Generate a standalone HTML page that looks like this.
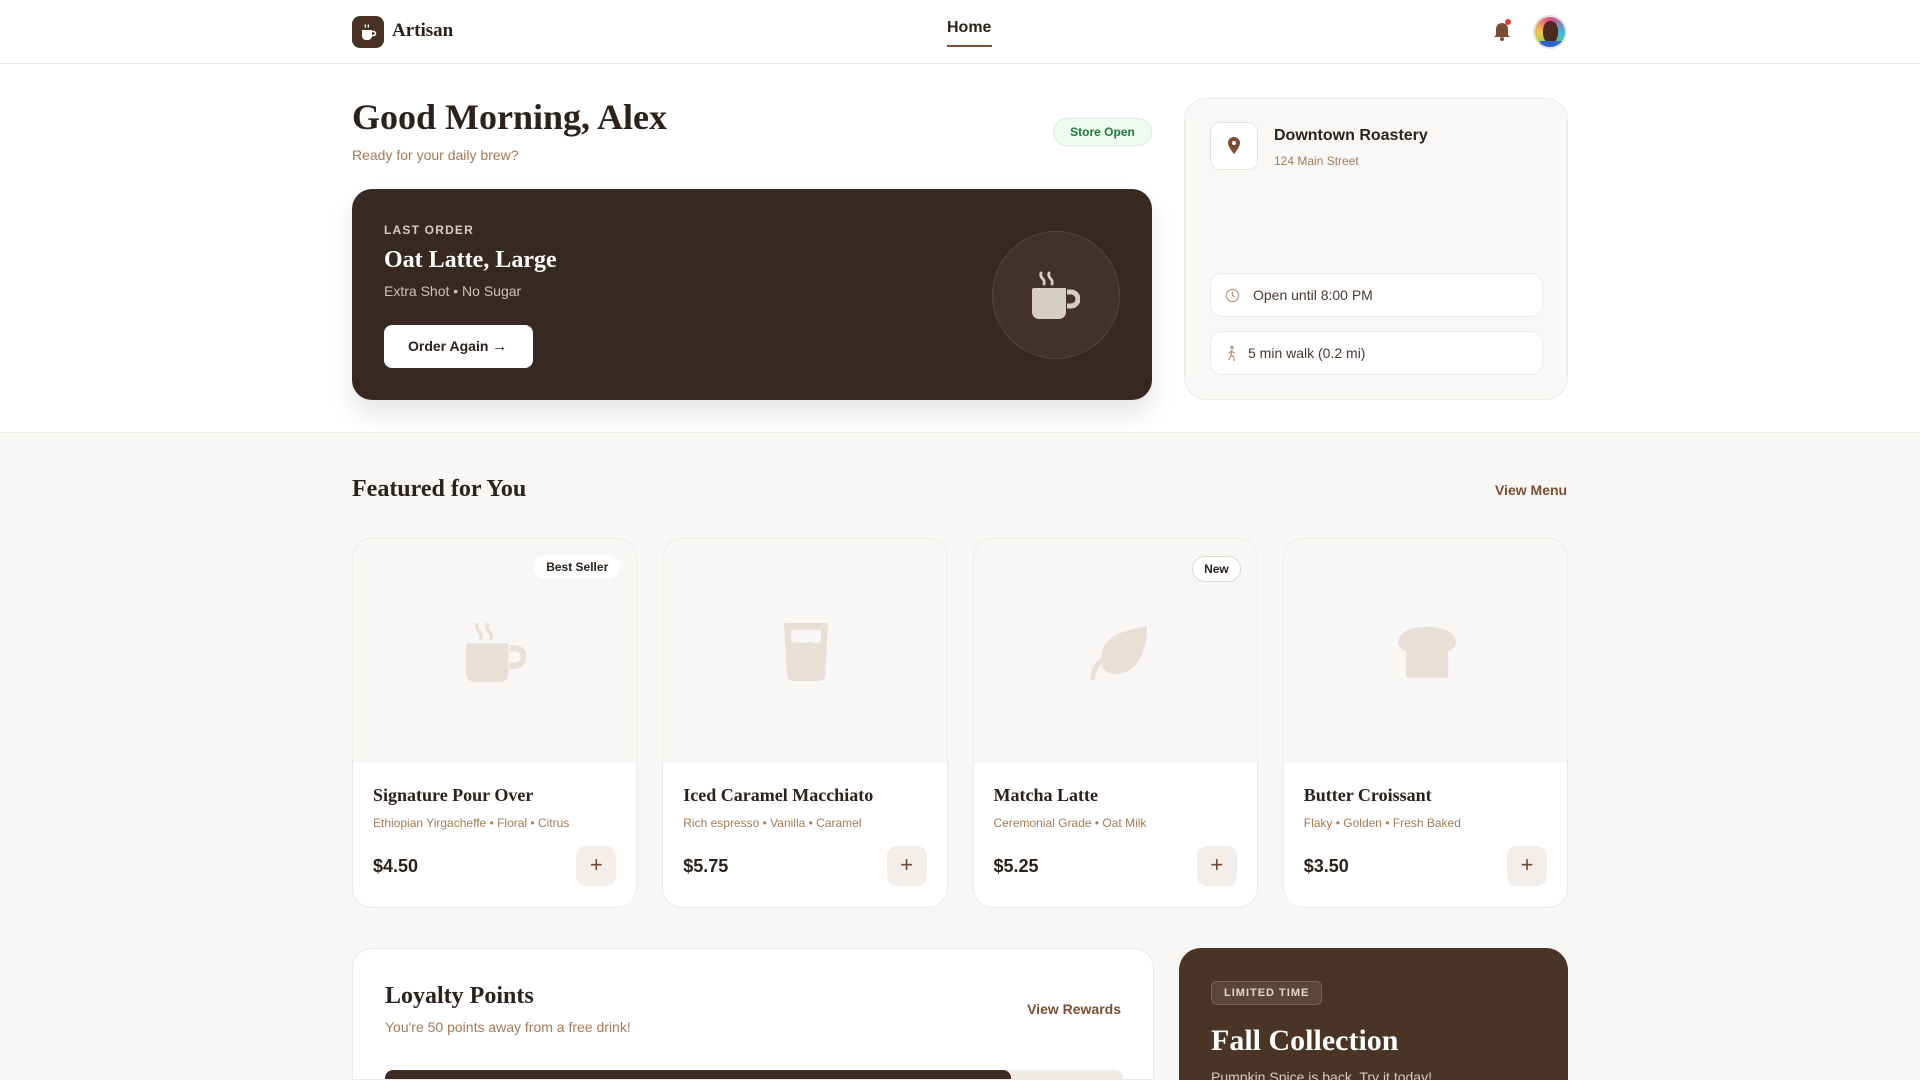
<!DOCTYPE html>
<html><head><meta charset="utf-8"><style>
*{box-sizing:border-box;margin:0;padding:0}
html,body{width:1920px;height:1080px;overflow:hidden}
body{font-family:"Liberation Sans",sans-serif;background:#fff;color:#2c211b;position:relative}
.serif{font-family:"Liberation Serif",serif;font-weight:700}
.abs{position:absolute}
header{position:absolute;left:0;top:0;width:1920px;height:64px;border-bottom:1px solid #ebe4dc;background:#fff}
.logo{left:352px;top:16px;width:32px;height:32px;border-radius:8px;background:#4a3325}
.brand{left:392px;top:20px;font-size:19px;color:#2c211b}
.home{left:947px;top:19px;font-size:16px;font-weight:700;color:#2c211b}
.ul{left:947px;top:45px;width:45px;height:2px;background:#7a4e33}
.beige{position:absolute;left:0;top:432px;width:1920px;height:648px;background:#f9f7f5;border-top:1px solid #f0ebe5}
.card{background:#fff;border:1px solid #efe9e3;border-radius:20px;overflow:hidden}
.img{height:224px;background:#f9f7f5;position:relative}
.t{font-size:18px;color:#2c211b}
.d{font-size:12px;color:#a57a55}
.p{font-size:18px;font-weight:700;color:#2c211b}
.plus{width:40px;height:40px;border-radius:10px;background:#f3eee9;color:#6b4a35;font-size:22px;text-align:center;line-height:38px}
.row{background:#fff;border:1px solid #f0ebe5;border-radius:12px;font-size:14px;color:#4a3a30}
</style></head><body>
<header>
<div class="abs logo"><svg width="32" height="32" viewBox="0 0 32 32"><path d="M10 14h10v6a4 4 0 0 1-4 4h-2a4 4 0 0 1-4-4z" fill="#fff"/><path d="M20 15.5h1.5a2 2 0 0 1 0 4H20" stroke="#fff" stroke-width="1.6" fill="none"/><path d="M13 8.5q1 1.5 0 3M16 8.5q1 1.5 0 3" stroke="#fff" stroke-width="1.2" fill="none"/></svg></div>
<div class="abs brand serif">Artisan</div>
<div class="abs home">Home</div><div class="abs ul"></div>
<svg class="abs" style="left:1491px;top:17px" width="22" height="26" viewBox="0 0 22 26"><path d="M5 18V12a6 6 0 0 1 12 0v6l2 2H3z" fill="#7a4e33"/><circle cx="11" cy="22" r="2" fill="#7a4e33"/><circle cx="17" cy="5" r="3" fill="#e53935"/></svg>
<div class="abs" style="left:1533px;top:15px;width:34px;height:34px;border-radius:50%;background:conic-gradient(#e84a8a,#3ab7d8,#6fd06f,#f5c84a,#e84a8a);border:2px solid #e9e2da;overflow:hidden"><div style="position:absolute;left:8px;top:4px;width:15px;height:22px;border-radius:45%;background:#4a2a1e"></div><div style="position:absolute;left:5px;top:24px;width:22px;height:10px;background:#2d63c9"></div></div>
</header>

<div class="abs serif" style="left:352px;top:96px;font-size:36px;color:#2c211b">Good Morning, Alex</div>
<div class="abs" style="left:352px;top:147px;font-size:14px;color:#a57a55">Ready for your daily brew?</div>
<div class="abs" style="left:1053px;top:118px;width:99px;height:28px;border-radius:14px;background:#effaf1;border:1px solid #d6f0dc;color:#1e7a3a;font-size:12px;font-weight:700;text-align:center;line-height:26px">Store Open</div>

<div class="abs" style="left:352px;top:189px;width:800px;height:211px;border-radius:20px;background:#382822;box-shadow:0 14px 24px rgba(60,40,30,.12)">
<div class="abs" style="left:32px;top:34px;font-size:12px;letter-spacing:1.2px;font-weight:700;color:#d7ccc2">LAST ORDER</div>
<div class="abs serif" style="left:32px;top:58px;font-size:24px;color:#fff">Oat Latte, Large</div>
<div class="abs" style="left:32px;top:94px;font-size:14px;color:#cfc3b8">Extra Shot • No Sugar</div>
<div class="abs" style="left:32px;top:136px;width:149px;height:43px;border-radius:8px;background:#fff;font-size:14px;font-weight:700;color:#2c211b;line-height:43px;padding-left:24px">Order Again <span style="font-size:15px">→</span></div>
<div class="abs" style="left:640px;top:42px;width:128px;height:128px;border-radius:50%;background:#43322b;border:1px solid #574339"></div>
<svg class="abs" style="left:680px;top:82px" width="48" height="48" viewBox="0 0 48 48"><path d="M0 19a2 2 0 0 1 2-2h32v24a7 7 0 0 1-7 7H7a7 7 0 0 1-7-7z" fill="#d6cdc3"/><path d="M35 21h4a6 6 0 0 1 0 14h-4" stroke="#d6cdc3" stroke-width="5" fill="none"/><path d="M9 2q-1 3 1.5 5.5T12 13M17 2q-1 3 1.5 5.5T20 13" stroke="#d6cdc3" stroke-width="2.8" fill="none" stroke-linecap="round"/></svg>
</div>

<div class="abs" style="left:1184px;top:98px;width:384px;height:302px;border-radius:22px;background:#faf8f6;border:1px solid #efe9e3">
<div class="abs" style="left:25px;top:23px;width:48px;height:48px;border-radius:10px;background:#fff;border:1px solid #e9e2da"></div>
<svg class="abs" style="left:41px;top:37px" width="16" height="20" viewBox="0 0 16 20"><path d="M8 1a6 6 0 0 1 6 6c0 4-6 11-6 11S2 11 2 7a6 6 0 0 1 6-6z" fill="#7a4e33"/><circle cx="8" cy="7" r="2" fill="#fff"/></svg>
<div class="abs" style="left:89px;top:28px;font-size:16px;font-weight:700;color:#2c211b">Downtown Roastery</div>
<div class="abs" style="left:89px;top:55px;font-size:12px;color:#a57a55">124 Main Street</div>
<div class="abs row" style="left:25px;top:174px;width:333px;height:44px"><svg class="abs" style="left:14px;top:14px" width="15" height="15" viewBox="0 0 16 16"><circle cx="8" cy="8" r="6.5" stroke="#b89a82" stroke-width="1.3" fill="none"/><path d="M8 4v4l2.5 1.5" stroke="#b89a82" stroke-width="1.3" fill="none"/></svg><span class="abs" style="left:42px;top:13px">Open until 8:00 PM</span></div>
<div class="abs row" style="left:25px;top:232px;width:333px;height:44px"><svg class="abs" style="left:14px;top:13px" width="14" height="17" viewBox="0 0 14 17"><circle cx="7" cy="2.5" r="1.8" fill="#b89a82"/><path d="M7 5l-1 5 3 2v4M6 10l-2 5M6.5 6l-3 2.5M7 6.5l3 2" stroke="#b89a82" stroke-width="1.3" fill="none"/></svg><span class="abs" style="left:37px;top:13px">5 min walk (0.2 mi)</span></div>
</div>

<div class="beige"></div>
<div class="abs serif" style="left:352px;top:476px;font-size:24px">Featured for You</div>
<div class="abs" style="left:1495px;top:482px;font-size:14px;font-weight:700;color:#7a4e33">View Menu</div>

<div class="abs" style="left:352px;top:538px;width:1216px;height:370px;display:grid;grid-template-columns:repeat(4,1fr);gap:25px">
 <div class="card"><div class="img"><div class="abs" style="right:16px;top:16px;padding:5px 12px;background:#fff;border-radius:14px;font-size:12px;font-weight:700">Best Seller</div>
 <svg class="abs" style="left:113px;top:83px" width="60" height="60" viewBox="0 0 48 48"><path d="M0 19a2 2 0 0 1 2-2h32v24a7 7 0 0 1-7 7H7a7 7 0 0 1-7-7z" fill="#e8e0d7"/><path d="M35 21h4a6 6 0 0 1 0 14h-4" stroke="#e8e0d7" stroke-width="5" fill="none"/><path d="M9 2q-1 3 1.5 5.5T12 13M17 2q-1 3 1.5 5.5T20 13" stroke="#e8e0d7" stroke-width="2.8" fill="none" stroke-linecap="round"/></svg></div>
 <div style="padding:22px 20px"><div class="t serif">Signature Pour Over</div><div class="d" style="margin-top:10px">Ethiopian Yirgacheffe • Floral • Citrus</div><div style="display:flex;justify-content:space-between;align-items:center;margin-top:16px"><span class="p">$4.50</span><div class="plus">+</div></div></div></div>
 <div class="card"><div class="img"><svg class="abs" style="left:120px;top:83px" width="46" height="60" viewBox="0 0 46 60"><path d="M1 3a2 2 0 0 1 2-2h40a2 2 0 0 1 2 2l-3 50a6 6 0 0 1-6 6H10a6 6 0 0 1-6-6z" fill="#e8e0d7"/><path d="M8 8h30v10a3 3 0 0 1-3 3h-4q-4-2-8 0h-4q-4-2-8 0a3 3 0 0 1-3-3z" fill="#f9f7f5"/></svg></div>
 <div style="padding:22px 20px"><div class="t serif">Iced Caramel Macchiato</div><div class="d" style="margin-top:10px">Rich espresso • Vanilla • Caramel</div><div style="display:flex;justify-content:space-between;align-items:center;margin-top:16px"><span class="p">$5.75</span><div class="plus">+</div></div></div></div>
 <div class="card"><div class="img"><div class="abs" style="right:16px;top:17px;padding:5px 11px;background:#fff;border:1px solid #e3d9cf;border-radius:14px;font-size:12px;font-weight:700">New</div>
 <svg class="abs" style="left:113px;top:85px" width="62" height="56" viewBox="0 0 62 56"><path d="M60 2C40 6 14 10 14 36c0 10 8 16 18 14C54 46 60 22 60 2z" fill="#e8e0d7"/><path d="M6 54C6 40 18 30 36 27" stroke="#e8e0d7" stroke-width="5" fill="none" stroke-linecap="round"/></svg></div>
 <div style="padding:22px 20px"><div class="t serif">Matcha Latte</div><div class="d" style="margin-top:10px">Ceremonial Grade • Oat Milk</div><div style="display:flex;justify-content:space-between;align-items:center;margin-top:16px"><span class="p">$5.25</span><div class="plus">+</div></div></div></div>
 <div class="card"><div class="img"><svg class="abs" style="left:112px;top:86px" width="62" height="54" viewBox="0 0 64 56"><path d="M32 2C14 2 2 8 2 18c0 5 4 8 8 9v25a3 3 0 0 0 3 3h38a3 3 0 0 0 3-3V27c4-1 8-4 8-9C62 8 50 2 32 2z" fill="#e8e0d7"/></svg></div>
 <div style="padding:22px 20px"><div class="t serif">Butter Croissant</div><div class="d" style="margin-top:10px">Flaky • Golden • Fresh Baked</div><div style="display:flex;justify-content:space-between;align-items:center;margin-top:16px"><span class="p">$3.50</span><div class="plus">+</div></div></div></div>
</div>

<div class="abs card" style="left:352px;top:948px;width:802px;height:132px;border-bottom-left-radius:0;border-bottom-right-radius:0">
<div class="abs serif" style="left:32px;top:34px;font-size:24px">Loyalty Points</div>
<div class="abs" style="left:32px;top:70px;font-size:14px;color:#a57a55">You're 50 points away from a free drink!</div>
<div class="abs" style="right:32px;top:52px;font-size:14px;font-weight:700;color:#7a4e33">View Rewards</div>
<div class="abs" style="left:32px;top:121px;width:738px;height:16px;border-radius:8px;background:#f0ebe5"><div style="width:626px;height:16px;border-radius:8px;background:#3f2c22"></div></div>
</div>
<div class="abs" style="left:1179px;top:948px;width:389px;height:132px;border-radius:22px 22px 0 0;background:#4a3425;overflow:hidden">
<div class="abs" style="left:32px;top:33px;padding:5px 12px;border:1px solid #7a6253;background:#5c4638;border-radius:6px;font-size:11px;font-weight:700;letter-spacing:1px;color:#e4d8ce">LIMITED TIME</div>
<div class="abs serif" style="left:32px;top:76px;font-size:30px;color:#fff">Fall Collection</div>
<div class="abs" style="left:32px;top:121px;font-size:14px;color:#d8cabd">Pumpkin Spice is back. Try it today!</div>
</div>
</body></html>
